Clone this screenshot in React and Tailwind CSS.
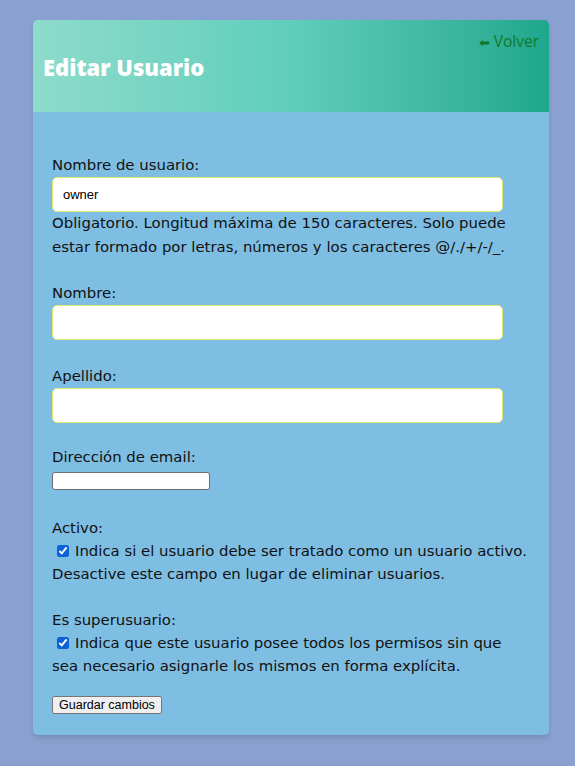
import React from 'react';

const font = { fontFamily: '"DejaVu Sans", "Open Sans", sans-serif' };

const TextField = ({ label, value }) => (
  <div>
    <label className="block leading-6">{label}</label>
    <input
      type="text"
      defaultValue={value}
      className="block w-[451px] h-[35px] bg-white border border-[#dfe86f] rounded-[5px] px-[10px] text-[13px] text-black outline-none"
      style={{ fontFamily: '"Liberation Sans", Arial, sans-serif' }}
    />
  </div>
);

export default function App() {
  return (
    <div className="min-h-[766px] w-full bg-[#8aa0d0] pt-5 pb-8" style={font}>
      <div className="ml-[33px] w-[516px] rounded-[5px] overflow-hidden shadow-md">
        {/* Header */}
        <div className="bg-gradient-to-r from-[#8edbca] via-[#5fcebc] to-[#1ea78e] px-[10px] pt-[11px] pb-[30px]">
          <div className="flex justify-end">
            <a href="#" className="text-[15.5px] leading-5 text-[#0f7a2a]" style={{ fontFamily: '"Open Sans", sans-serif' }}>
              <span className="text-[13px] mr-[4px]">⬅</span>Volver
            </a>
          </div>
          <h1
            className="text-[22px] leading-[30px] font-extrabold text-white"
            style={{ fontFamily: '"Open Sans", sans-serif' }}
          >
            Editar Usuario
          </h1>
        </div>

        {/* Body */}
        <form className="bg-[#7fbee3] px-[19px] pt-[41px] pb-[21px] text-[14.9px] text-[#111]">
          <TextField label="Nombre de usuario:" value="owner" />
          <p className="leading-6 mt-[-1px]">
            Obligatorio. Longitud máxima de 150 caracteres. Solo puede estar formado por letras, números y los caracteres @/./+/-/_.
          </p>

          <div className="mt-[22px]">
            <TextField label="Nombre:" value="" />
          </div>

          <div className="mt-[24px]">
            <TextField label="Apellido:" value="" />
          </div>

          <div className="mt-[22px]">
            <label className="block leading-6">Dirección de email:</label>
            <input
              type="email"
              className="block mt-[3px] w-[158px] h-[18px] bg-white border border-[#6f6f6f] rounded-[3px]"
            />
          </div>

          <div className="mt-[26px]">
            <label className="block leading-6">Activo:</label>
            <p className="leading-[23px]">
              <input type="checkbox" defaultChecked className="w-[12px] h-[12px] ml-[5px] mr-[6px] align-[-1px] accent-[#0b62d6]" />
              Indica si el usuario debe ser tratado como un usuario activo. Desactive este campo en lugar de eliminar usuarios.
            </p>
          </div>

          <div className="mt-[22px]">
            <label className="block leading-6">Es superusuario:</label>
            <p className="leading-[23px]">
              <input type="checkbox" defaultChecked className="w-[12px] h-[12px] ml-[5px] mr-[6px] align-[-1px] accent-[#0b62d6]" />
              Indica que este usuario posee todos los permisos sin que sea necesario asignarle los mismos en forma explícita.
            </p>
          </div>

          <button
            type="button"
            className="mt-[18px] block h-[18px] px-[6px] bg-[#efefef] border border-[#767676] rounded-[2px] text-[12.5px] leading-[15px] text-black"
            style={{ fontFamily: '"Liberation Sans", Arial, sans-serif' }}
          >
            Guardar cambios
          </button>
        </form>
      </div>
    </div>
  );
}
